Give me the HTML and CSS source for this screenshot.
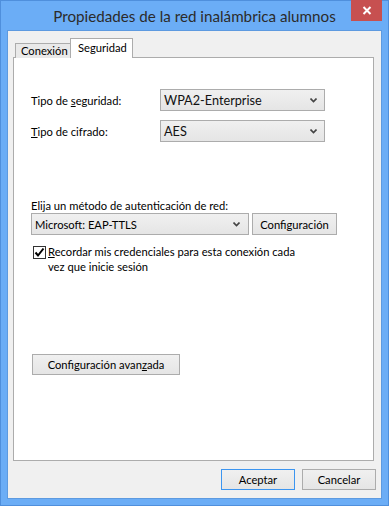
FILE: index.html
```html
<!DOCTYPE html>
<html lang="es">
<head>
<meta charset="utf-8">
<title>Propiedades de la red inalámbrica alumnos</title>
<link rel="stylesheet" href="styles.css">
</head>
<body>
<div class="window">
  <div class="titlebar">
    <span class="spacer"></span>
    <div class="title">Propiedades de la red inalámbrica alumnos</div>
    <div class="close">
      <svg width="10" height="9" viewBox="0 0 10 9"><path d="M1.5 1 L8.5 8 M8.5 1 L1.5 8" stroke="#fff" stroke-width="2" fill="none"/></svg>
    </div>
  </div>
  <div class="client">
    <div class="tabs">
      <div class="tab">Conexión</div>
      <div class="tab active">Seguridad</div>
    </div>
    <div class="panel">
      <div class="row first">
        <div class="label">Tipo de <u>s</u>eguridad:</div>
        <div class="select strong"><span>WPA2-Enterprise</span><svg class="chev" width="7" height="5" viewBox="0 0 7 5"><path d="M0.5 0.5 L3.5 3.5 L6.5 0.5" stroke="#444" stroke-width="1.6" fill="none"/></svg></div>
      </div>
      <div class="row">
        <div class="label"><u>T</u>ipo de cifrado:</div>
        <div class="select strong"><span>AES</span><svg class="chev" width="7" height="5" viewBox="0 0 7 5"><path d="M0.5 0.5 L3.5 3.5 L6.5 0.5" stroke="#444" stroke-width="1.6" fill="none"/></svg></div>
      </div>
      <div class="auth-label">Elija un método de autenticación de red:</div>
      <div class="auth-row">
        <div class="select auth"><span>Microsoft: EAP-TTLS</span><svg class="chev" width="7" height="5" viewBox="0 0 7 5"><path d="M0.5 0.5 L3.5 3.5 L6.5 0.5" stroke="#444" stroke-width="1.6" fill="none"/></svg></div>
        <button class="btn cfg">Confi<u>g</u>uración</button>
      </div>
      <div class="check">
        <span class="box"><svg width="11" height="11" viewBox="0 0 11 11"><path d="M1.5 5.5 L4 8.5 L9.5 1.5" stroke="#000" stroke-width="2" fill="none"/></svg></span>
        <span class="check-text"><u>R</u>ecordar mis credenciales para esta conexión cada<br>vez que inicie sesión</span>
      </div>
      <button class="btn adv">Configuración avan<u>z</u>ada</button>
    </div>
    <div class="footer">
      <button class="btn default">Aceptar</button>
      <button class="btn">Cancelar</button>
    </div>
  </div>
</div>
</body>
</html>
```

FILE: styles.css
```css
* { box-sizing: border-box; }
html, body { margin: 0; padding: 0; }
body {
  font-family: Lato, "Noto Sans", sans-serif;
  font-size: 11.2px;
  color: #000;
  background: #6badf6;
}
.window {
  width: 389px;
  height: 506px;
  background: #6badf6;
  border: 1px solid #4f8fdc;
  display: flex;
  flex-direction: column;
}
.titlebar {
  height: 29px;
  display: grid;
  grid-template-columns: 1fr auto 1fr;
  align-items: start;
}
.title {
  font-size: 15.2px;
  color: #2b2b2b;
  line-height: 20px;
  padding-top: 5px;
  white-space: nowrap;
}
.close {
  justify-self: end;
  margin-top: -1px;
  margin-right: 6px;
  width: 31px;
  height: 21px;
  background: #c75050;
  display: flex;
  align-items: center;
  justify-content: center;
}
.client {
  flex: 1;
  margin: 0 6px 6px 6px;
  border: 1px solid #5d9ae0;
  background: #f0f0f0;
  padding: 7px 7px 0 5px;
  display: flex;
  flex-direction: column;
}
.tabs {
  display: flex;
  align-items: flex-end;
  padding-left: 2px;
  margin-bottom: -1px;
  position: relative;
  z-index: 1;
}
.tab {
  height: 15px;
  line-height: 14px;
  padding: 0 0 0 5px;
  border: 1px solid #acacac;
  border-bottom: none;
  background: #e9e9e9;
  width: 56px;
}
.tab.active {
  height: 20px;
  width: 63px;
  background: #fff;
  margin-left: -1px;
  padding-left: 7px;
  line-height: 17px;
}
.panel {
  height: 404px;
  background: #fff;
  border: 1px solid #acacac;
  padding: 0 0 0 17px;
  display: flex;
  flex-direction: column;
  align-items: flex-start;
}
.row {
  display: flex;
  align-items: center;
  margin-top: 9px;
}
.row.first { margin-top: 31px; }
.label { width: 129px; }
.select {
  height: 22px;
  display: flex;
  align-items: center;
  justify-content: space-between;
  border: 1px solid #acacac;
  background: linear-gradient(#f0f0f0, #e5e5e5);
  padding: 0 7px 0 3px;
  width: 165px;
}
.select.strong span { font-size: 12.7px; color: #111; }
.chev { flex: none; }
.auth-label {
  margin-top: 56px;
  line-height: 15px;
}
.auth-row {
  display: flex;
  gap: 3px;
}
.select.auth { width: 218px; padding-right: 8px; }
.btn {
  font: inherit;
  color: #000;
  height: 22px;
  border: 1px solid #acacac;
  background: linear-gradient(#f0f0f0, #e5e5e5);
  padding: 0;
  margin: 0;
}
.cfg { width: 85px; }
.check {
  display: flex;
  align-items: flex-start;
  margin-top: 9px;
  padding-left: 2px;
  line-height: 15px;
}
.box {
  width: 13px;
  height: 13px;
  border: 1px solid #333;
  background: #fff;
  margin-top: 2px;
  margin-right: 2px;
  display: flex;
  align-items: center;
  justify-content: center;
}
.adv {
  margin-top: 80px;
  margin-left: 1px;
  width: 148px;
  height: 21px;
}
.footer {
  display: flex;
  justify-content: flex-end;
  gap: 7px;
  margin-top: 8px;
  margin-right: -2px;
}
.footer .btn { width: 74px; height: 21px; }
.btn.default { border-color: #3c95f0; }
u { text-decoration: underline; text-underline-offset: 1px; }
```
